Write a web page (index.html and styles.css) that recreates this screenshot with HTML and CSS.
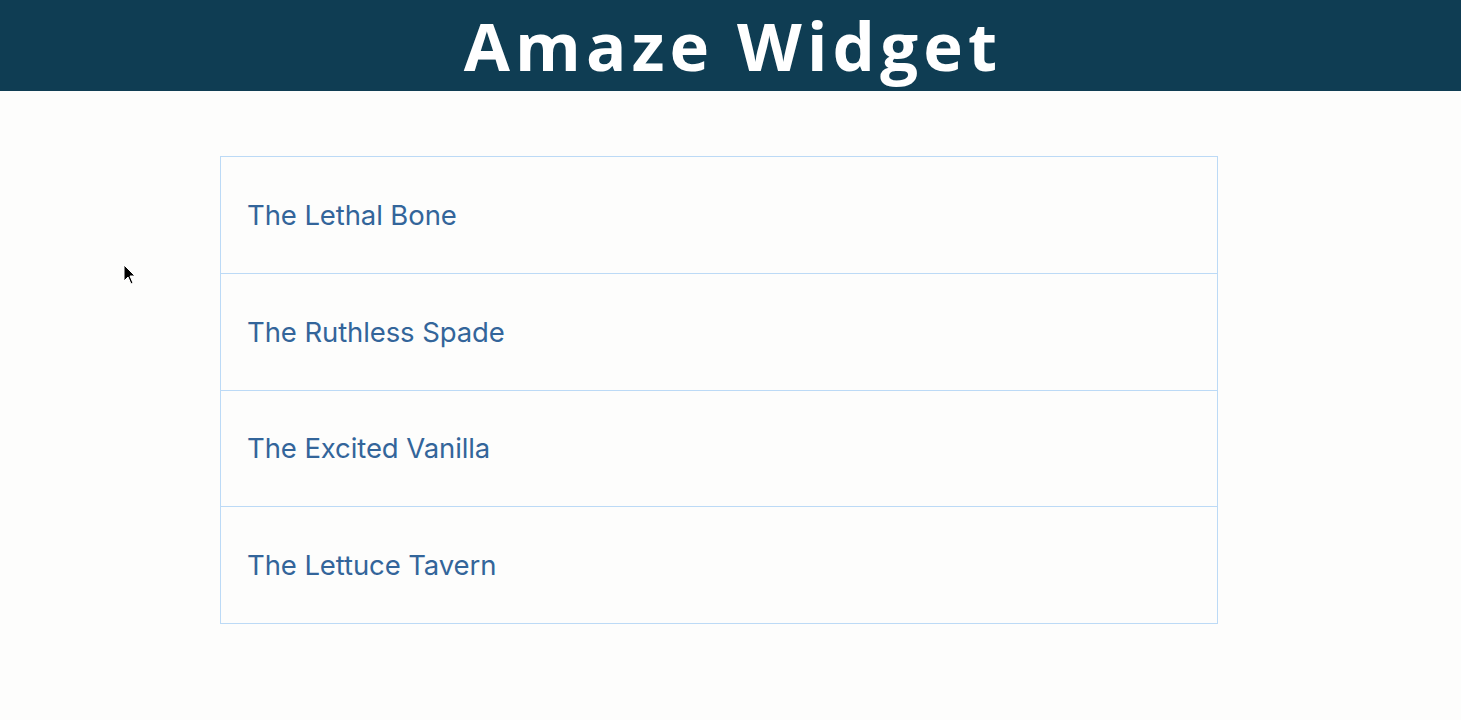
FILE: index.html
```html
<!DOCTYPE html>
<html>
<head>
<meta charset="utf-8">
<link rel="stylesheet" href="styles.css">
</head>
<body>
<header class="header"><h1 class="title">Amaze Widget</h1></header>
<main class="main">
  <ul class="list">
    <li class="item">The Lethal Bone</li>
    <li class="item">The Ruthless Spade</li>
    <li class="item">The Excited Vanilla</li>
    <li class="item">The Lettuce Tavern</li>
  </ul>
</main>
<svg class="cursor" width="16" height="24" viewBox="0 0 16 24"><path d="M1 1 L1 17 L5 13 L8 20 L10 19 L7 12 L12 12 Z" fill="#000" stroke="#fff" stroke-width="1"/></svg>
</body>
</html>
```
FILE: styles.css
```css
html, body { margin: 0; padding: 0; }
body { background: #fdfdfc; font-family: "Inter", "Noto Sans", sans-serif; position: relative; min-height: 720px; }
.header { background: #0f3d53; height: 91px; display: flex; justify-content: center; align-items: flex-start; }
.title { margin: 0; padding: 0 0 0 5px; color: #fff; font-family: "Open Sans", sans-serif; font-weight: 700; font-size: 67px; line-height: 91px; letter-spacing: 5.2px; }
.main { padding: 65px 0 0 220px; display: flex; }
.list { list-style: none; margin: 0; padding: 0; width: 996px; border: 1px solid #bcdaf6; }
.item { height: 116.67px; box-sizing: border-box; display: flex; align-items: center; padding: 0 0 0 26px; color: #33659a; font-size: 27.5px; letter-spacing: -0.1px; border-top: 1px solid #bcdaf6; }
.item:first-child { border-top: none; height: 116px; }
.cursor { position: absolute; left: 123px; top: 264px; }
```
